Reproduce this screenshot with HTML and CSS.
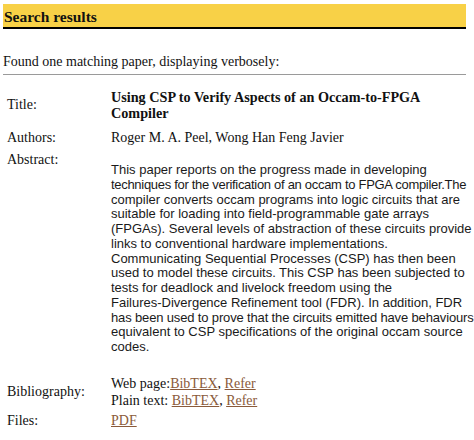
FILE: index.html
```html
<!DOCTYPE html>
<html>
<head>
<meta charset="utf-8">
<link rel="stylesheet" href="styles.css">
</head>
<body>
<div class="page">
  <h2 class="banner">Search results</h2>
  <p class="found">Found one matching paper, displaying verbosely:</p>
  <hr class="rule">
  <div class="record">
    <div class="row row-title">
      <div class="label">Title:</div>
      <div class="value title">Using CSP to Verify Aspects of an Occam-to-FPGA Compiler</div>
    </div>
    <div class="row row-authors">
      <div class="label">Authors:</div>
      <div class="value">Roger M. A. Peel, Wong Han Feng Javier</div>
    </div>
    <div class="row row-abstract">
      <div class="label">Abstract:</div>
      <div class="value abstract"><span class="ln">This paper reports on the progress made in developing</span><span class="ln tighter">techniques for the verification of an occam to FPGA compiler.The</span><span class="ln">compiler converts occam programs into logic circuits that are</span><span class="ln">suitable for loading into field-programmable gate arrays</span><span class="ln">(FPGAs). Several levels of abstraction of these circuits provide</span><span class="ln">links to conventional hardware implementations.</span><span class="ln">Communicating Sequential Processes (CSP) has then been</span><span class="ln">used to model these circuits. This CSP has been subjected to</span><span class="ln">tests for deadlock and livelock freedom using the</span><span class="ln">Failures-Divergence Refinement tool (FDR). In addition, FDR</span><span class="ln tight">has been used to prove that the circuits emitted have behaviours</span><span class="ln">equivalent to CSP specifications of the original occam source</span><span class="ln">codes.</span></div>
    </div>
    <div class="row row-biblio">
      <div class="label">Bibliography:</div>
      <div class="value biblio">Web page:<a href="#">BibTEX</a>, <a href="#">Refer</a><br>Plain text: <a href="#">BibTEX</a>, <a href="#">Refer</a></div>
    </div>
    <div class="row row-files">
      <div class="label">Files:</div>
      <div class="value"><a href="#">PDF</a></div>
    </div>
  </div>
</div>
</body>
</html>
```
FILE: styles.css
```css
html, body {
  margin: 0;
  padding: 0;
  background: #fff;
}
.page {
  width: 463px;
  padding: 4px 0 0 3px;
  font-family: "Liberation Serif", "Times New Roman", serif;
  font-size: 14px;
  color: #111;
}
.banner {
  margin: 0;
  height: 23px;
  line-height: 25px;
  padding-left: 1px;
  background: #f8d147;
  border-bottom: 2px solid #000;
  font-size: 15.5px;
  font-weight: bold;
  color: #111;
}
.found {
  margin: 25px 0 0 0;
  line-height: 15px;
}
.rule {
  margin: 5px 0 0 0;
  border: 0;
  border-top: 1px solid #9a9a9a;
  height: 0;
}
.record {
  margin-top: 14px;
}
.row {
  display: grid;
  grid-template-columns: 108px minmax(0, 1fr);
  align-items: center;
  line-height: 16px;
}
.label {
  padding-left: 4px;
}
.row-authors {
  margin-top: 9px;
}
.row-abstract {
  margin-top: 6px;
  align-items: start;
}
.row-abstract .label {
  line-height: 15px;
}
.title {
  font-weight: bold;
  font-size: 14.2px;
}
.abstract {
  padding-top: 11px;
  font-family: "Liberation Sans", Arial, sans-serif;
  font-size: 13px;
  line-height: 14.75px;
  color: #1a1a1a;
}
.ln {
  display: block;
  white-space: nowrap;
}
.ln.tight {
  letter-spacing: -0.15px;
}
.ln.tighter {
  letter-spacing: -0.3px;
}
.row-biblio {
  margin-top: 20px;
  line-height: 17px;
}
.row-files {
  margin-top: 3px;
  line-height: 17px;
}
.value a {
  color: #8a5a3a;
  text-decoration: underline;
}
```
